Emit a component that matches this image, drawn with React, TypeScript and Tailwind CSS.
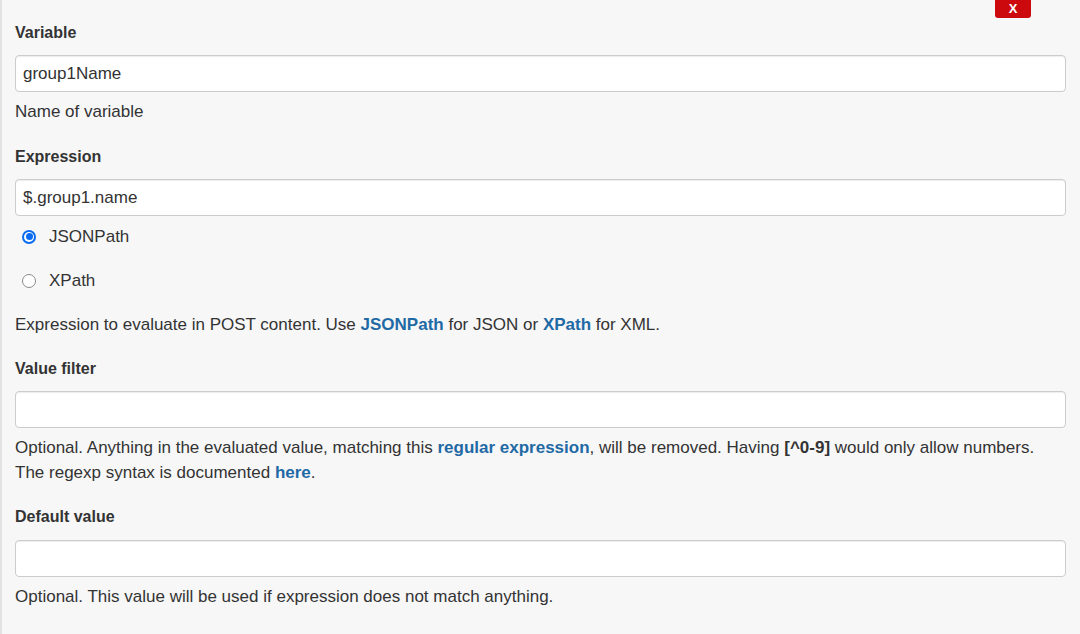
import type { ReactNode } from 'react'

/** Label over a field — bold, 16px. */
function FieldLabel({ children }: { children: ReactNode }) {
  return <div className="h-[22px] text-[16px] font-bold leading-[22px] text-[#333]">{children}</div>
}

function TextInput({ value = '', gap = 'mt-[11px]' }: { value?: string; gap?: string }) {
  return (
    <input
      type="text"
      defaultValue={value}
      className={`${gap} block h-[37px] w-full rounded-[4px] border border-[#cccccc] bg-white px-[7px] text-[17px] text-[#333] shadow-[inset_0_1px_1px_rgba(0,0,0,0.075)] outline-none`}
    />
  )
}

function Help({ children, gap = 'mt-[7px]' }: { children: ReactNode; gap?: string }) {
  return <p className={`${gap} text-[17px] leading-[25px] text-[#333]`}>{children}</p>
}

function Lnk({ children }: { children: ReactNode }) {
  return <a className="font-bold text-[#1f6aa5] no-underline">{children}</a>
}

function Radio({ label, checked }: { label: string; checked?: boolean }) {
  return (
    <label className="flex h-[25px] items-center gap-[13px] pl-[7px] text-[17px] leading-[25px] text-[#333]">
      {checked ? (
        <span className="flex h-[14px] w-[14px] items-center justify-center rounded-full bg-[#0a6cf0]">
          <span className="flex h-[10px] w-[10px] items-center justify-center rounded-full bg-white">
            <span className="h-[7px] w-[7px] rounded-full bg-[#0a6cf0]" />
          </span>
        </span>
      ) : (
        <span className="h-[14px] w-[14px] rounded-full border border-[#8a8a8a] bg-white" />
      )}
      <span>{label}</span>
    </label>
  )
}

export default function App() {
  return (
    <div
      className="relative h-[634px] w-[1080px] overflow-hidden border-l-2 border-[#e2e2e4] bg-[#f7f7f8] pl-[13px] pr-[14px] pt-[22px]"
      style={{ fontFamily: '"Liberation Sans", Arial, sans-serif' }}
    >
      <button
        type="button"
        className="absolute right-[49px] top-0 h-[18px] w-[36px] rounded-b-[3px] bg-[#cc0a0e] text-[13px] font-bold leading-[18px] text-white"
      >
        X
      </button>

      <FieldLabel>Variable</FieldLabel>
      <TextInput value="group1Name" />
      <Help>Name of variable</Help>

      <div className="mt-[22px]">
        <FieldLabel>Expression</FieldLabel>
        <TextInput value="$.group1.name" />
        <div className="mt-[8px] flex flex-col gap-[19px]">
          <Radio label="JSONPath" checked />
          <Radio label="XPath" />
        </div>
        <Help gap="mt-[19px]">
          Expression to evaluate in POST content. Use <Lnk>JSONPath</Lnk> for JSON or <Lnk>XPath</Lnk> for XML.
        </Help>
      </div>

      <div className="mt-[21px]">
        <FieldLabel>Value filter</FieldLabel>
        <TextInput />
        <Help>
          Optional. Anything in the evaluated value, matching this <Lnk>regular expression</Lnk>, will be removed. Having{' '}
          <b>[^0-9]</b> would only allow numbers.
          <br />
          The regexp syntax is documented <Lnk>here</Lnk>.
        </Help>
      </div>

      <div className="mt-[21px]">
        <FieldLabel>Default value</FieldLabel>
        <TextInput gap="mt-[12px]" />
        <Help>Optional. This value will be used if expression does not match anything.</Help>
      </div>
    </div>
  )
}
